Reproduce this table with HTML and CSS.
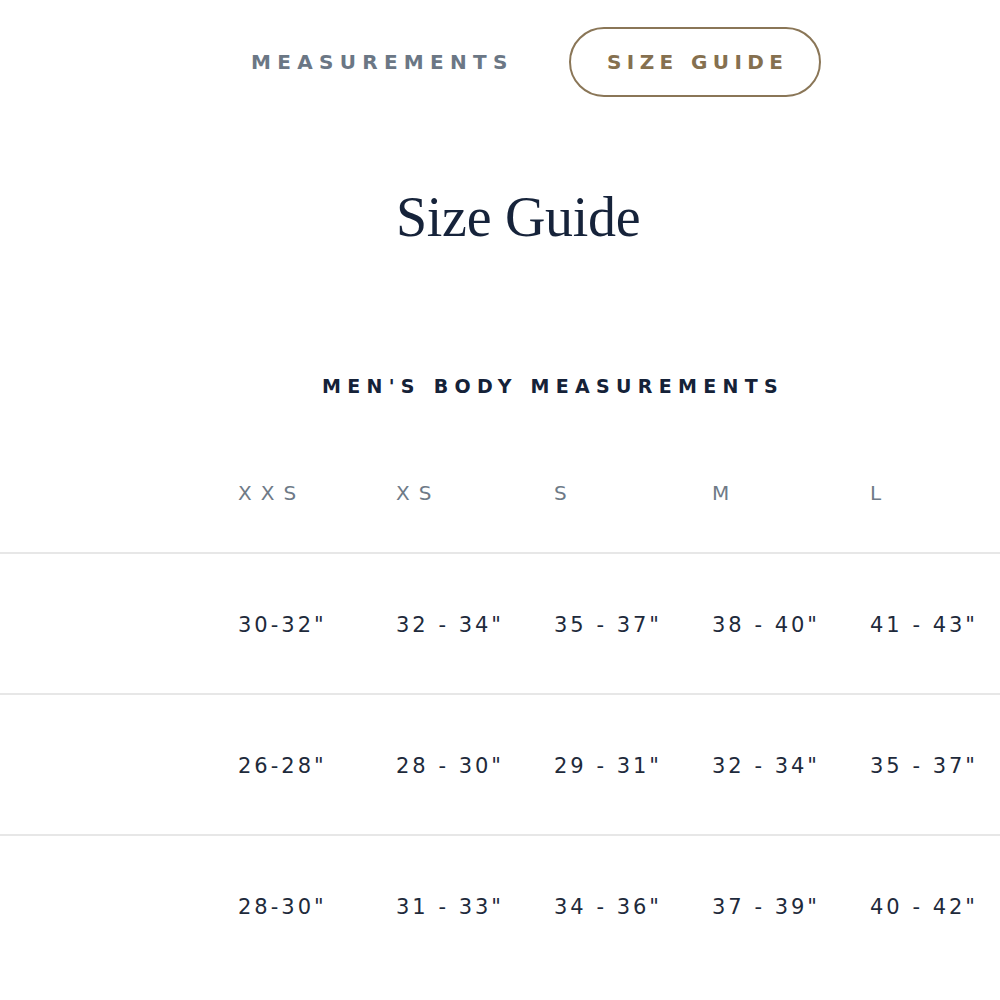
FILE: index.html
```html
<!DOCTYPE html>
<html lang="en">
<head>
  <meta charset="UTF-8">
  <title>Size Guide</title>
  <link rel="stylesheet" href="styles.css">
</head>
<body>

  <nav class="tabs">
    <button class="tab">MEASUREMENTS</button>
    <button class="tab tab-active">SIZE GUIDE</button>
  </nav>

  <h1 class="page-title">Size Guide</h1>

  <h2 class="section-title">MEN'S BODY MEASUREMENTS</h2>

  <table class="size-table">
    <colgroup>
      <col class="col-label">
      <col class="col-size">
      <col class="col-size">
      <col class="col-size">
      <col class="col-size">
      <col class="col-last">
    </colgroup>
    <thead>
      <tr>
        <th></th>
        <th>XXS</th>
        <th>XS</th>
        <th>S</th>
        <th>M</th>
        <th>L</th>
      </tr>
    </thead>
    <tbody>
      <tr>
        <td></td>
        <td>30-32"</td>
        <td>32 - 34"</td>
        <td>35 - 37"</td>
        <td>38 - 40"</td>
        <td>41 - 43"</td>
      </tr>
      <tr>
        <td></td>
        <td>26-28"</td>
        <td>28 - 30"</td>
        <td>29 - 31"</td>
        <td>32 - 34"</td>
        <td>35 - 37"</td>
      </tr>
      <tr class="last-row">
        <td></td>
        <td>28-30"</td>
        <td>31 - 33"</td>
        <td>34 - 36"</td>
        <td>37 - 39"</td>
        <td>40 - 42"</td>
      </tr>
    </tbody>
  </table>

</body>
</html>
```

FILE: styles.css
```css
html, body {
  margin: 0;
  overflow: hidden;
}

body {
  font-family: "DejaVu Sans", Verdana, sans-serif;
  background-color: #ffffff;
  color: #1b2739;
}

/* top tabs */
.tabs {
  display: flex;
  align-items: center;
  gap: 55px;
  padding: 27px 0 0 251px;
}

.tab {
  font-family: "DejaVu Sans", Verdana, sans-serif;
  font-size: 20px;
  font-weight: bold;
  letter-spacing: 6.3px;
  color: #6b7785;
  background: none;
  border: none;
  padding: 0;
  cursor: pointer;
}

.tab-active {
  height: 70px;
  width: 252px;
  padding-left: 6px;
  letter-spacing: 5.4px;
  color: #85704f;
  border: 2px solid #8a7657;
  border-radius: 35px;
}

.page-title {
  font-family: "Liberation Serif", "Times New Roman", serif;
  font-weight: normal;
  font-size: 56px;
  letter-spacing: -0.3px;
  color: #16233a;
  margin: 92px 0 0 396px;
  line-height: 1;
}

.section-title {
  font-size: 19px;
  font-weight: bold;
  letter-spacing: 6.3px;
  color: #152238;
  margin: 132px 0 0 322px;
  line-height: 1;
}

/* table */
.size-table {
  border-collapse: collapse;
  table-layout: fixed;
  width: 1000px;
  margin-top: 87px;
}

.col-label {
  width: 238px;
}

.col-size {
  width: 158px;
}

.col-last {
  width: 130px;
}

.size-table th {
  text-align: left;
  font-weight: normal;
  font-size: 20px;
  line-height: 20px;
  letter-spacing: 9px;
  color: #6e7a87;
  padding: 0 0 49px 0;
  border-bottom: 2px solid #e7e7e7;
}

.size-table td {
  text-align: left;
  font-size: 21px;
  line-height: 20px;
  letter-spacing: 3px;
  color: #1e2a3b;
  height: 137px;
  padding: 2px 0 0 0;
  white-space: nowrap;
  border-bottom: 2px solid #e7e7e7;
}

.last-row td {
  border-bottom: none;
}
```
